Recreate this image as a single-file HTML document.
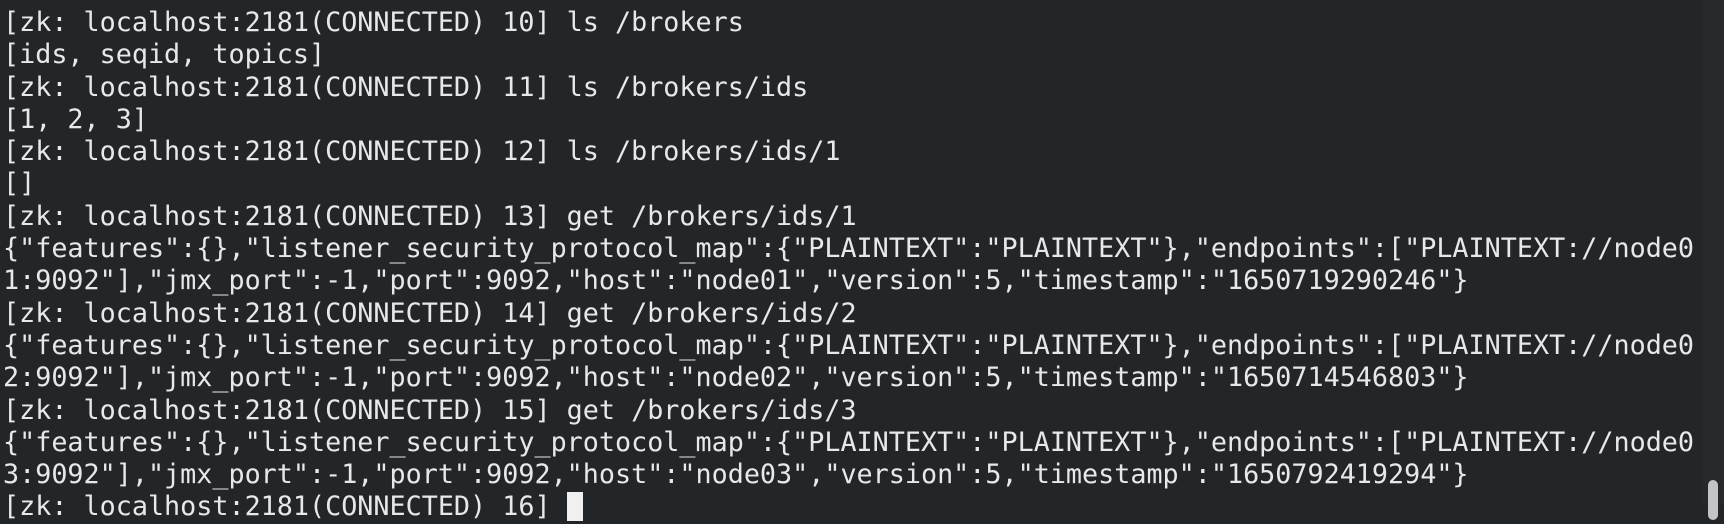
<!DOCTYPE html>
<html><head><meta charset="utf-8"><style>
html,body{margin:0;padding:0;width:1724px;height:504px;overflow:hidden;background:#232629;}
pre{margin:0;position:absolute;left:3px;top:7px;font-family:"DejaVu Sans Mono","Liberation Mono",monospace;font-size:26.75px;line-height:32.3px;color:#e8e8e8;white-space:pre;}
.track{position:absolute;left:1702px;top:0;width:22px;height:504px;background:#26292c;}
.thumb{position:absolute;left:1708px;top:480px;width:10px;height:40px;border-radius:5px;background:#c4c4c4;}
.cur{display:inline-block;width:16px;height:29px;background:#f0f0f0;vertical-align:-6px;}
</style></head><body>
<div class="track"></div>
<pre>[zk: localhost:2181(CONNECTED) 10] ls /brokers
[ids, seqid, topics]
[zk: localhost:2181(CONNECTED) 11] ls /brokers/ids
[1, 2, 3]
[zk: localhost:2181(CONNECTED) 12] ls /brokers/ids/1
[]
[zk: localhost:2181(CONNECTED) 13] get /brokers/ids/1
{"features":{},"listener_security_protocol_map":{"PLAINTEXT":"PLAINTEXT"},"endpoints":["PLAINTEXT://node0
1:9092"],"jmx_port":-1,"port":9092,"host":"node01","version":5,"timestamp":"1650719290246"}
[zk: localhost:2181(CONNECTED) 14] get /brokers/ids/2
{"features":{},"listener_security_protocol_map":{"PLAINTEXT":"PLAINTEXT"},"endpoints":["PLAINTEXT://node0
2:9092"],"jmx_port":-1,"port":9092,"host":"node02","version":5,"timestamp":"1650714546803"}
[zk: localhost:2181(CONNECTED) 15] get /brokers/ids/3
{"features":{},"listener_security_protocol_map":{"PLAINTEXT":"PLAINTEXT"},"endpoints":["PLAINTEXT://node0
3:9092"],"jmx_port":-1,"port":9092,"host":"node03","version":5,"timestamp":"1650792419294"}
[zk: localhost:2181(CONNECTED) 16] <span class="cur"></span></pre>
<div class="thumb"></div>
</body></html>
